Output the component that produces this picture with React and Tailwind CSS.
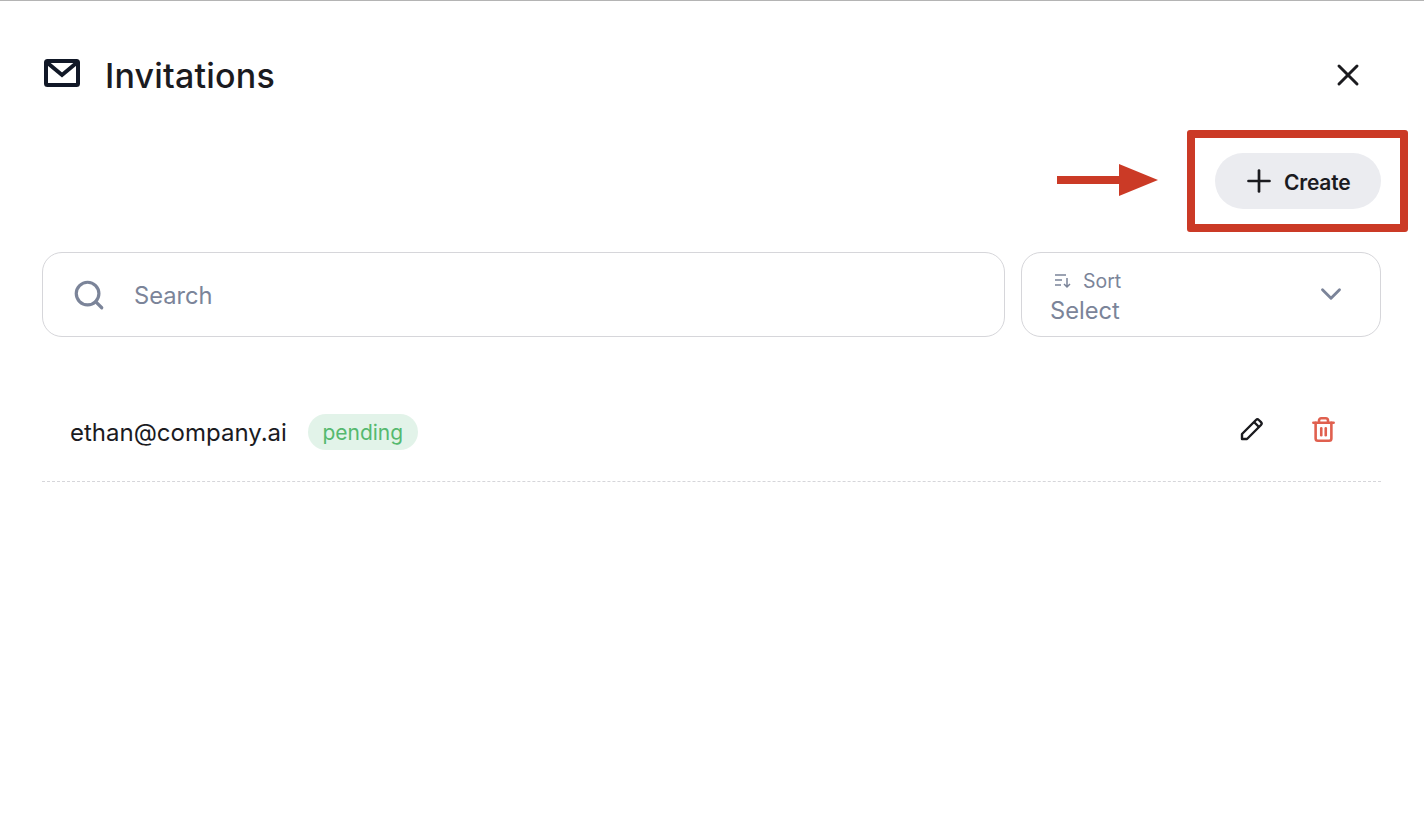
import React from "react";
import { ChevronDown, Plus, Search, Trash2, X } from "lucide-react";

function MailIcon() {
  return (
    <svg width="36" height="28" viewBox="0 0 36 28" fill="none" className="mb-[5px] block">
      <rect x="2" y="2" width="32" height="24" rx="1.5" stroke="#111827" strokeWidth="4" />
      <path d="M3 3.5l15 12.5L33 3.5" stroke="#111827" strokeWidth="4" />
    </svg>
  );
}

function SortIcon() {
  return (
    <svg width="18" height="16" viewBox="0 0 18 16" fill="none" stroke="#7b8499" strokeWidth="1.5" className="block">
      <path d="M1 2h11M1 7h7M1 12h6" />
      <path d="M13 5v9M10 11l3 3 3-3" />
    </svg>
  );
}

function PencilIcon() {
  return (
    <svg width="24" height="24" viewBox="0 0 24 24" fill="none" stroke="#1b1b1f" strokeWidth="2.4" strokeLinejoin="round" className="block">
      <path d="M2 22v-5L16 3a2 2 0 0 1 2.8 0l2.2 2.2a2 2 0 0 1 0 2.8L7 22z" />
      <path d="M14 5l5 5" />
    </svg>
  );
}

export default function App() {
  return (
    <div className="relative h-[832px] w-[1424px] overflow-hidden border-t border-[#b4b4b4] bg-white pl-[42px] pr-[43px] font-['Inter',sans-serif]">
      {/* Header */}
      <div className="flex h-[95px] items-end justify-between pl-[2px] pr-[15px]">
        <div className="flex items-center gap-[25px]">
          <MailIcon />
          <h1 className="mt-[2px] text-[34px] leading-[40px] font-medium tracking-[0.2px] text-[#1b1b1f]">Invitations</h1>
        </div>
        <X size={36} strokeWidth={2} className="mb-[3px] text-[#1b1b1f]" />
      </div>

      {/* Create */}
      <div className="mt-[57px] flex justify-end">
        <button className="flex h-[56px] w-[166px] items-center gap-[7px] rounded-full bg-[#ebecf0] pl-[26px] text-[21px] font-semibold tracking-[-0.2px] text-[#1b1b1f]">
          <Plus size={36} strokeWidth={1.8} className="mb-[1px]" />
          <span className="mt-[4px]">Create</span>
        </button>
      </div>

      {/* Filters */}
      <div className="mt-[43px] flex gap-[16px]">
        <div className="flex h-[85px] flex-1 items-center gap-[28px] rounded-[20px] border border-[#d6d6da] pl-[29px]">
          <Search size={34} strokeWidth={2.25} className="text-[#7b8499]" />
          <span className="mt-[3px] text-[23.7px] text-[#7b8499]">Search</span>
        </div>
        <div className="flex h-[85px] w-[360px] items-center justify-between rounded-[20px] border border-[#d6d6da] pl-[28px] pr-[32px]">
          <div className="mt-[6px]">
            <div className="flex items-center gap-[11px] pl-[4px] text-[19.5px] leading-[26px] text-[#7b8499]">
              <SortIcon />
              Sort
            </div>
            <div className="text-[23.7px] leading-[33px] text-[#7b8499]">Select</div>
          </div>
          <ChevronDown size={34} strokeWidth={2} className="mb-[2px] text-[#7b8499]" />
        </div>
      </div>

      {/* Invitation row */}
      <div className="mt-[48px] flex h-[97px] items-center justify-between border-b border-dashed border-[#d6d6da] pb-[2px] pl-[28px] pr-[44px]">
        <div className="flex items-center gap-[21px]">
          <span className="mt-[2px] text-[24px] text-[#1b1b1f]">ethan@company.ai</span>
          <span className="flex h-[36px] items-center rounded-full bg-[#e2f3e9] px-[14.5px] pt-[2px] text-[21px] text-[#55b96f]">pending</span>
        </div>
        <div className="mb-[6px] flex items-center gap-[46px]">
          <PencilIcon />
          <Trash2 size={27} strokeWidth={2.3} className="text-[#e0604f]" />
        </div>
      </div>

      {/* Annotation */}
      <div className="absolute left-[1187px] top-[129px] h-[102px] w-[221px] rounded-[3px] border-[8px] border-[#cb3a26]" />
      <svg width="104" height="32" viewBox="0 0 104 32" className="absolute left-[1056px] top-[163px]">
        <path d="M1 12h62V0l39 16-39 16V20H1z" fill="#cb3a26" />
      </svg>
    </div>
  );
}
